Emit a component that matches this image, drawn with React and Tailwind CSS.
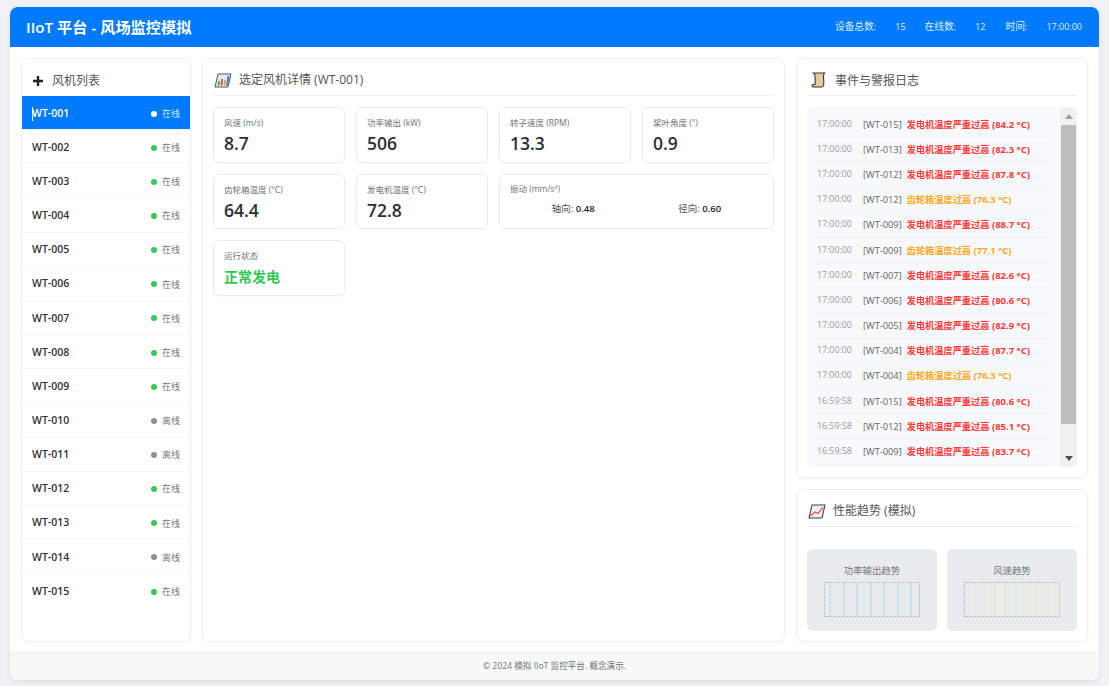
import React from 'react';

const turbines = [
  ['WT-001', true], ['WT-002', true], ['WT-003', true], ['WT-004', true], ['WT-005', true],
  ['WT-006', true], ['WT-007', true], ['WT-008', true], ['WT-009', true], ['WT-010', false],
  ['WT-011', false], ['WT-012', true], ['WT-013', true], ['WT-014', false], ['WT-015', true],
];

const GEN = '发电机温度严重过高';
const GEAR = '齿轮箱温度过高';
const logs = [
  ['17:00:00', 'WT-015', GEN, '84.2', 'r'],
  ['17:00:00', 'WT-013', GEN, '82.3', 'r'],
  ['17:00:00', 'WT-012', GEN, '87.8', 'r'],
  ['17:00:00', 'WT-012', GEAR, '76.3', 'o'],
  ['17:00:00', 'WT-009', GEN, '88.7', 'r'],
  ['17:00:00', 'WT-009', GEAR, '77.1', 'o'],
  ['17:00:00', 'WT-007', GEN, '82.6', 'r'],
  ['17:00:00', 'WT-006', GEN, '80.6', 'r'],
  ['17:00:00', 'WT-005', GEN, '82.9', 'r'],
  ['17:00:00', 'WT-004', GEN, '87.7', 'r'],
  ['17:00:00', 'WT-004', GEAR, '76.3', 'o'],
  ['16:59:58', 'WT-015', GEN, '80.6', 'r'],
  ['16:59:58', 'WT-012', GEN, '85.1', 'r'],
  ['16:59:58', 'WT-009', GEN, '83.7', 'r'],
];

function ChartIcon() {
  return (
    <svg width="18" height="15" viewBox="0 0 18 15">
      <path d="M4 1h13l-3 13H1z" fill="#e8ecef" stroke="#555" strokeWidth="1" />
      <path d="M4.500 12.500L5 8" stroke="#2fa84f" strokeWidth="1.800" />
      <path d="M7.500 12.500L8 6" stroke="#e2453c" strokeWidth="1.800" />
      <path d="M10.500 12.500L11 7" stroke="#e8a33a" strokeWidth="1.800" />
      <path d="M13 12.500L14.500 3" stroke="#2f7de1" strokeWidth="1.800" />
    </svg>
  );
}

function ScrollIcon() {
  return (
    <svg className="ml-[3px] mr-[2px]" width="15" height="16" viewBox="0 0 15 16">
      <path d="M2.500 1h11c-1 1-1.200 2.500-1 4.500.2 2.500.500 5 .2 7.500-.2 1.500-1 2-2 2H2.500c-1 0-1.500-.8-1.500-1.500s.5-1 1.500-1h1.500C4.500 9 4.200 5.500 3.800 3 3.600 2 3.300 1.500 2.500 1z" fill="#e8c9a0" stroke="#3f332b" strokeWidth="1.100" />
    </svg>
  );
}

function TrendIcon() {
  return (
    <svg width="18" height="15" viewBox="0 0 18 15">
      <path d="M4 1h13l-3 13H1z" fill="#eef0f2" stroke="#444" strokeWidth="1.100" />
      <path d="M2.500 12l4.500-4 3 1.500 5-6" fill="none" stroke="#e2553c" strokeWidth="1.200" />
    </svg>
  );
}

function Panel({ icon, title, titleClass, className, children }) {
  return (
    <section className={`bg-white rounded-lg border border-[#eef0f2] shadow-[0_1px_3px_rgba(0,0,0,0.04)] px-[10px] ${className}`}>
      <div className="h-[37px] pt-[6px] flex items-center gap-[7px] border-b border-[#eef0f2] text-[12px] text-[#555] pl-px">
        {icon}
        <span className={titleClass}>{title}</span>
      </div>
      {children}
    </section>
  );
}

function Metric({ label, value }) {
  return (
    <div className="h-[55.500px] rounded-md border border-[#e9ecef] px-[10px] pt-[9px] shadow-[0_1px_2px_rgba(0,0,0,0.03)]">
      <div className="text-[8.500px] leading-[12px] text-[#6c757d]">{label}</div>
      <div className="mt-[2px] text-[17.500px] leading-[24px] font-semibold text-[#2b3035]">{value}</div>
    </div>
  );
}

function TrendCard({ title, lineClass, padClass, count }) {
  return (
    <div className="h-[82px] rounded-md bg-[#e9ecef] flex flex-col items-center pt-[15px]">
      <div className="text-[9.400px] leading-[13px] text-[#777]">{title}</div>
      <div className={`mt-[5px] w-[96px] h-[35px] border border-dotted border-[#b0b0b0] flex justify-between ${padClass}`}>
        {Array.from({ length: count }).map((_, i) => (
          <div key={i} className={`w-[2px] h-full ${lineClass}`} />
        ))}
      </div>
    </div>
  );
}

export default function App() {
  return (
    <div className="h-[686px] bg-[#f0f2f5] px-[10px] pt-[7px] pb-[6px] font-['Open_Sans','Noto_Sans_CJK_SC',sans-serif]">
      <div className="h-full flex flex-col bg-white rounded-lg overflow-hidden shadow-[0_2px_6px_rgba(0,0,0,0.08)]">
        <header className="h-[40px] shrink-0 bg-[#007bff] text-white flex items-center justify-between pl-[16px] pr-[17px]">
          <h1 className="text-[15.200px] font-semibold">IIoT 平台 - 风场监控模拟</h1>
          <div className="flex items-center text-[9px] text-[#dcebff]">
            <span className="text-[9.700px]">设备总数:</span>
            <span className="ml-[19px]">15</span>
            <span className="ml-[19px] text-[9.700px]">在线数:</span>
            <span className="ml-[19px]">12</span>
            <span className="ml-[20px] text-[9.700px]">时间:</span>
            <span className="ml-[19px]">17:00:00</span>
          </div>
        </header>

        <main className="flex-1 min-h-0 flex gap-[11px] px-[11px] pt-[11px] pb-[10px]">
          <section className="w-[170px] shrink-0 bg-white rounded-lg border border-[#eef0f2] shadow-[0_1px_3px_rgba(0,0,0,0.04)] overflow-hidden">
            <div className="h-[37px] pt-[6px] flex items-center gap-[9px] pl-[11px] text-[12px] text-[#555]">
              <svg width="10" height="10" viewBox="0 0 10 10"><path d="M5 0v10M0 5h10" stroke="#222" strokeWidth="2.400" /></svg>
              <span>风机列表</span>
            </div>
            {turbines.map(([id, online], i) => (
              <div
                key={id}
                className={`h-[34.150px] pt-[2px] flex items-center pl-[10px] pr-[10px] border-b border-[#f4f5f6] last:border-b-0 ${i === 0 ? 'bg-[#007bff] text-white' : 'text-[#333]'}`}
              >
                <span className="text-[10.500px] font-semibold flex-1 relative">
                  {i === 0 && <span className="absolute left-0 top-[1px] w-px h-[14px] bg-white" />}
                  {id}
                </span>
                <span className={`w-[6px] h-[6px] rounded-full mr-[5px] ${i === 0 ? 'bg-white' : online ? 'bg-[#34c759]' : 'bg-[#8e8e93]'}`} />
                <span className={`text-[9px] ${i === 0 ? 'text-[#cfe4ff]' : 'text-[#777]'}`}>{online ? '在线' : '离线'}</span>
              </div>
            ))}
          </section>

          <Panel icon={<ChartIcon />} title="选定风机详情 (WT-001)" className="flex-1 min-w-0">
            <div className="grid grid-cols-4 gap-x-[11px] gap-y-[11px] pt-[11px]">
              <Metric label="风速 (m/s)" value="8.7" />
              <Metric label="功率输出 (kW)" value="506" />
              <Metric label="转子速度 (RPM)" value="13.3" />
              <Metric label="桨叶角度 (°)" value="0.9" />
              <Metric label="齿轮箱温度 (°C)" value="64.4" />
              <Metric label="发电机温度 (°C)" value="72.8" />
              <div className="col-span-2 h-[55.500px] rounded-md border border-[#e9ecef] px-[10px] pt-[8px] shadow-[0_1px_2px_rgba(0,0,0,0.03)]">
                <div className="text-[8.500px] leading-[12px] text-[#6c757d]">振动 (mm/s²)</div>
                <div className="grid grid-cols-2 mt-[7px] text-[9.500px] leading-[14px] text-[#555] text-center">
                  <span>轴向: <b className="text-[#212529] font-semibold">0.48</b></span>
                  <span>径向: <b className="text-[#212529] font-semibold">0.60</b></span>
                </div>
              </div>
              <div className="h-[55.500px] rounded-md border border-[#e9ecef] px-[10px] pt-[9px] shadow-[0_1px_2px_rgba(0,0,0,0.03)]">
                <div className="text-[8.500px] leading-[12px] text-[#6c757d]">运行状态</div>
                <div className="mt-[3px] text-[14px] leading-[24px] font-bold text-[#34c759]">正常发电</div>
              </div>
            </div>
          </Panel>

          <div className="w-[292px] shrink-0 flex flex-col gap-[11px]">
            <Panel icon={<ScrollIcon />} title="事件与警报日志" titleClass="mt-px" className="h-[420px] shrink-0">
              <div className="mt-[11px] h-[360px] rounded-md bg-[#f8f9fa] flex overflow-hidden">
                <div className="flex-1 min-w-0 pl-[10px] pr-[11px] pt-[5px]">
                  {logs.map(([time, id, msg, temp, level], i) => (
                    <div key={i} className="h-[25.200px] flex items-center border-b border-dotted border-[#eeeeee] text-[9.300px] leading-[13px] whitespace-nowrap">
                      <span className="w-[46px] text-[#999] text-[8.800px]">{time}</span>
                      <span className="text-[#666] font-medium mr-[5px]">[{id}]</span>
                      <span className={`font-bold text-[9.500px] ${level === 'r' ? 'text-[#ff3b3b]' : 'text-[#ffa726]'}`}>
                        <span className="text-[9.200px]">{msg}</span> ({temp} °C)
                      </span>
                    </div>
                  ))}
                </div>
                <div className="w-[17px] shrink-0 bg-[#f1f1f1] flex flex-col items-center px-[1px]">
                  <div className="h-[18px] flex items-center justify-center">
                    <svg width="8" height="5" viewBox="0 0 8 5"><path d="M4 0l4 5H0z" fill="#a0a0a0" /></svg>
                  </div>
                  <div className="w-full h-[299px] bg-[#bdbdbd]" />
                  <div className="flex-1 flex items-end pb-[6px]">
                    <svg width="8" height="5" viewBox="0 0 8 5"><path d="M0 0h8L4 5z" fill="#505050" /></svg>
                  </div>
                </div>
              </div>
            </Panel>

            <Panel icon={<TrendIcon />} title="性能趋势 (模拟)" className="flex-1 min-h-0">
              <div className="grid grid-cols-2 gap-[10px] mt-[22px]">
                <TrendCard title="功率输出趋势" lineClass="bg-[#cfe0f3]" padClass="pl-[4px] pr-[7px]" count={7} />
                <TrendCard title="风速趋势" lineClass="bg-[#f0e6d8]" padClass="pl-[9px] pr-[2px]" count={9} />
              </div>
            </Panel>
          </div>
        </main>

        <footer className="h-[28px] shrink-0 bg-[#f8f8f8] border-t border-[#eef0f2] flex items-center justify-center text-[8.600px] text-[#6c757d]">
          © 2024 模拟 IIoT 监控平台. 概念演示.
        </footer>
      </div>
    </div>
  );
}
